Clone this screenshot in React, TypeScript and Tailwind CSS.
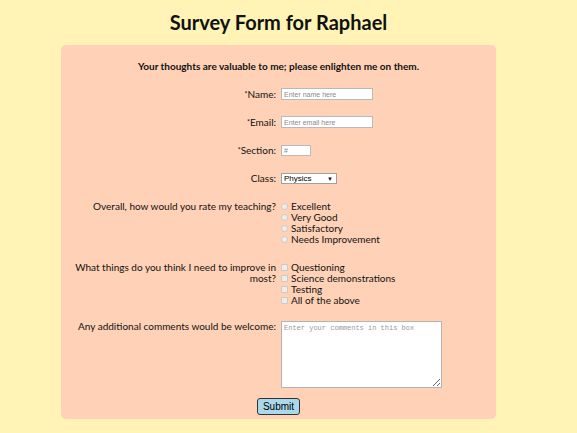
import React from 'react';

const ratings = ['Excellent', 'Very Good', 'Satisfactory', 'Needs Improvement'];
const improvements = ['Questioning', 'Science demonstrations', 'Testing', 'All of the above'];

const Row = ({ label, children, className = '' }: { label: React.ReactNode; children: React.ReactNode; className?: string }) => (
  <div className={`flex ${className}`}>
    <div className="w-[210px] shrink-0 text-right pr-[5px] leading-[11px]">{label}</div>
    <div className="flex-1">{children}</div>
  </div>
);

const Req = () => <span className="text-[7px] align-top">*</span>;

export default function App() {
  return (
    <div className="min-h-[433px] bg-[#fff4b6] text-[#111] font-['Lato',sans-serif] text-[10px]">
      <div className="w-[557px]">
        <h1 className="pt-[9px] text-center text-[20px] font-bold leading-[26px]">Survey Form for Raphael</h1>
        <form className="mt-[10px] ml-[61px] w-[435px] rounded-[5px] bg-[#ffd1b6] pl-[10px] pt-[15px] pb-[4px]">
          <p className="pr-[10px] text-center font-bold leading-[12px]">Your thoughts are valuable to me; please enlighten me on them.</p>

          <Row label={<>
            <Req />Name:</>} className="mt-[16px] items-center">
            <input
              placeholder="Enter name here"
              className="block h-[12px] w-[92px] border border-[#b9b9b9] bg-white px-[2px] text-[7px] font-['Liberation_Sans',sans-serif] placeholder:text-[#8a8a8a] outline-none"
            />
          </Row>
          <Row label={<>
            <Req />Email:</>} className="mt-[16px] items-center">
            <input
              placeholder="Enter email here"
              className="block h-[12px] w-[92px] border border-[#b9b9b9] bg-white px-[2px] text-[7px] font-['Liberation_Sans',sans-serif] placeholder:text-[#8a8a8a] outline-none"
            />
          </Row>
          <Row label={<>
            <Req />Section:</>} className="mt-[17px] items-center">
            <input
              placeholder="#"
              className="block h-[11px] w-[30px] border border-[#b9b9b9] bg-white px-[2px] text-[7px] font-['Liberation_Sans',sans-serif] placeholder:text-[#8a8a8a] outline-none"
            />
          </Row>
          <Row label="Class:" className="mt-[17px] items-center">
            <div className="relative h-[11px] w-[56px] border border-[#a0a0a0] bg-white">
              <select className="block h-full w-full appearance-none bg-transparent pl-[2px] text-[8px] leading-[9px] font-['Liberation_Sans',sans-serif] text-black outline-none">
                <option>Physics</option>
                <option>Chemistry</option>
                <option>Biology</option>
              </select>
              <span className="pointer-events-none absolute right-[3px] top-[1px] text-[6px] leading-[8px]">▼</span>
            </div>
          </Row>

          <Row label="Overall, how would you rate my teaching?" className="mt-[17px]">
            {ratings.map((r) => (
              <label key={r} className="flex items-center leading-[11px]">
                <span className="mr-[3px] inline-block h-[7px] w-[7px] rounded-full border border-[#c9c9c9] bg-[#f0ece8]" />
                {r}
              </label>
            ))}
          </Row>

          <Row label={<>
            What things do you think I need to improve in
            <br />
            most?</>} className="mt-[17px]">
            {improvements.map((r) => (
              <label key={r} className="flex items-center leading-[11px]">
                <span className="mr-[3px] inline-block h-[7px] w-[7px] rounded-[1px] border border-[#c9c9c9] bg-[#f0ece8]" />
                {r}
              </label>
            ))}
          </Row>

          <Row label="Any additional comments would be welcome:" className="mt-[15px]">
            <textarea
              placeholder="Enter your comments in this box"
              className="block h-[67px] w-[161px] border border-[#b3b3b3] bg-white px-[2px] py-[1px] text-[7px] font-['Liberation_Mono',monospace] placeholder:text-[#999] outline-none"
            />
          </Row>

          <div className="mt-[10px] pr-[10px] text-center">
            <button
              type="button"
              className="h-[17px] w-[43px] rounded-[3px] border border-[#333] bg-[#a9d9ea] text-[10px] leading-[15px] font-['Liberation_Sans',sans-serif] text-black"
            >
              Submit
            </button>
          </div>
        </form>
      </div>
    </div>
  );
}
